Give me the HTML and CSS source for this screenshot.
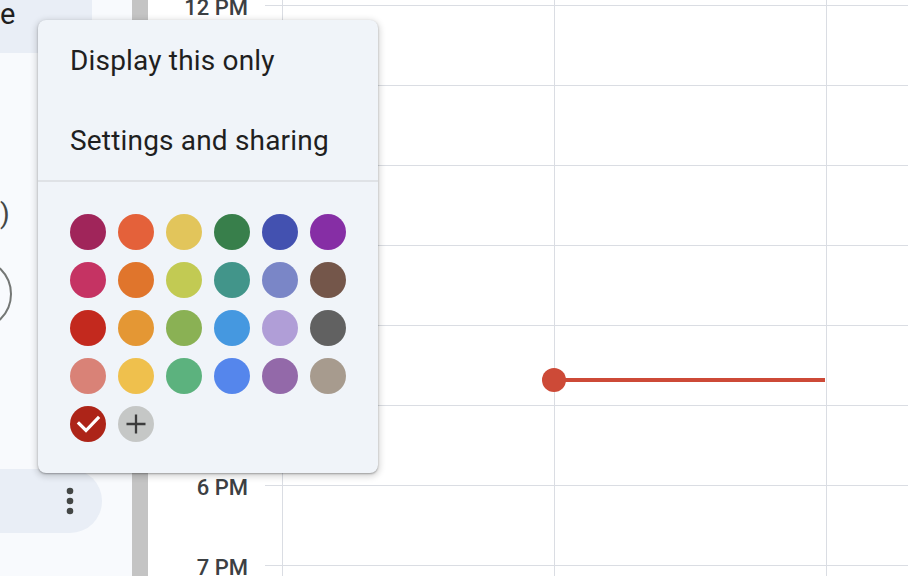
FILE: index.html
```html
<!DOCTYPE html>
<html>
<head>
<meta charset="utf-8">
<link rel="stylesheet" href="styles.css">
</head>
<body>
<div class="app">
  <aside class="sidebar">
    <div class="side-top"><span class="side-text">e</span></div>
    <div class="side-paren">)</div>
    <div class="side-ring"></div>
    <div class="side-row">
      <svg class="dots" width="8" height="28" viewBox="0 0 8 28"><circle cx="4" cy="4" r="3.3"/><circle cx="4" cy="14" r="3.3"/><circle cx="4" cy="24" r="3.3"/></svg>
    </div>
  </aside>
  <div class="scrollbar"></div>
  <main class="cal">
    <div class="grid">
      <div class="lbl"><span>11 AM</span></div><div class="tick"></div><div class="day"></div><div class="day"></div><div class="day"></div>
      <div class="lbl"><span>12 PM</span></div><div class="tick"></div><div class="day"></div><div class="day"></div><div class="day"></div>
      <div class="lbl"><span>1 PM</span></div><div class="tick"></div><div class="day"></div><div class="day"></div><div class="day"></div>
      <div class="lbl"><span>2 PM</span></div><div class="tick"></div><div class="day"></div><div class="day"></div><div class="day"></div>
      <div class="lbl"><span>3 PM</span></div><div class="tick"></div><div class="day"></div><div class="day"></div><div class="day"></div>
      <div class="lbl"><span>4 PM</span></div><div class="tick"></div><div class="day"></div><div class="day now-cell"><div class="now-line"></div><div class="now-dot"></div></div><div class="day"></div>
      <div class="lbl"><span>5 PM</span></div><div class="tick"></div><div class="day"></div><div class="day"></div><div class="day"></div>
      <div class="lbl"><span>6 PM</span></div><div class="tick"></div><div class="day"></div><div class="day"></div><div class="day"></div>
      <div class="lbl"><span>7 PM</span></div><div class="tick"></div><div class="day"></div><div class="day"></div><div class="day"></div>
    </div>
  </main>
  <div class="menu">
    <div class="menu-item">Display this only</div>
    <div class="menu-item">Settings and sharing</div>
    <div class="menu-sep"></div>
    <div class="palette">
      <span class="sw c1"></span><span class="sw c2"></span><span class="sw c3"></span><span class="sw c4"></span><span class="sw c5"></span><span class="sw c6"></span>
      <span class="sw c7"></span><span class="sw c8"></span><span class="sw c9"></span><span class="sw c10"></span><span class="sw c11"></span><span class="sw c12"></span>
      <span class="sw c13"></span><span class="sw c14"></span><span class="sw c15"></span><span class="sw c16"></span><span class="sw c17"></span><span class="sw c18"></span>
      <span class="sw c19"></span><span class="sw c20"></span><span class="sw c21"></span><span class="sw c22"></span><span class="sw c23"></span><span class="sw c24"></span>
      <span class="sw c25"><svg width="36" height="36" viewBox="0 0 36 36"><path d="M9 17.5 L16 24.5 L28 12" fill="none" stroke="#fff" stroke-width="3.2" stroke-linecap="square"/></svg></span>
      <span class="sw add"><svg width="36" height="36" viewBox="0 0 36 36"><path d="M8.5 18 H27.5 M18 8.5 V27.5" fill="none" stroke="#3c3c3c" stroke-width="2.3"/></svg></span>
    </div>
  </div>
</div>
</body>
</html>
```
FILE: styles.css
```css
* { box-sizing: border-box; }
html, body { margin: 0; padding: 0; }
body {
  width: 908px;
  height: 576px;
  overflow: hidden;
  background: #fff;
  font-family: Roboto, "Liberation Sans", sans-serif;
  color: #1f1f1f;
}
.app {
  position: relative;
  display: flex;
  width: 908px;
  height: 576px;
  overflow: hidden;
}
.sidebar {
  width: 132px;
  flex: none;
  background: #f8fafd;
  display: flex;
  flex-direction: column;
  align-items: flex-start;
}
.side-top {
  width: 92px;
  height: 53px;
  background: #e9eef6;
  font-size: 29px;
  line-height: 28px;
}
.side-text { display: block; margin-left: 0; }
.side-paren {
  margin-top: 147px;
  font-size: 28px;
  line-height: 28px;
  color: #444746;
  padding-left: 0;
}
.side-ring {
  margin-top: 30px;
  margin-left: -60px;
  width: 72px;
  height: 72px;
  border-radius: 50%;
  border: 2px solid #747775;
}
.side-row {
  margin-top: 139px;
  width: 102px;
  height: 64px;
  background: #e9eef6;
  border-radius: 0 32px 32px 0;
  display: flex;
  align-items: center;
  justify-content: flex-end;
  padding-right: 28px;
}
.dots { fill: #444746; display: block; }
.scrollbar {
  width: 16px;
  flex: none;
  background: #c4c4c4;
}
.cal {
  flex: 1;
  overflow: hidden;
  background: #fff;
}
.grid {
  margin-top: -75px;
  display: grid;
  grid-template-columns: 117px 17px 272px 272px 1fr;
  grid-auto-rows: 80px;
}
.lbl {
  text-align: right;
  padding-right: 17px;
}
.lbl span {
  display: block;
  margin-top: -8px;
  font-size: 22px;
  line-height: 22px;
  font-weight: 500;
  color: #3c4043;
}
.tick { border-top: 1px solid #dadde3; }
.day {
  border-top: 1px solid #dadde3;
  border-left: 1px solid #dadde3;
}
.now-cell { position: relative; }
.now-line {
  position: absolute;
  left: 0;
  right: 1px;
  top: 52px;
  height: 4px;
  background: #cd4a37;
}
.now-dot {
  position: absolute;
  left: -13px;
  top: 42px;
  width: 24px;
  height: 24px;
  border-radius: 50%;
  background: #cd4a37;
}
.menu {
  position: absolute;
  left: 38px;
  top: 20px;
  width: 340px;
  height: 453px;
  background: #f0f4f9;
  border-radius: 8px;
  box-shadow: 0 2px 6px 2px rgba(0,0,0,0.15), 0 1px 2px rgba(0,0,0,0.3);
  display: flex;
  flex-direction: column;
}
.menu-item {
  height: 80px;
  display: flex;
  align-items: center;
  padding-left: 32px;
  font-size: 28px;
  line-height: 32px;
  letter-spacing: 0.18px;
  color: #1f1f1f;
  padding-top: 2px;
}
.menu-sep {
  height: 2px;
  background: #dfe2e6;
}
.palette {
  padding: 32px 32px 31px;
  display: grid;
  grid-template-columns: repeat(6, 36px);
  grid-auto-rows: 36px;
  gap: 12px;
}
.sw {
  display: block;
  width: 36px;
  height: 36px;
  border-radius: 50%;
}
.sw svg { display: block; }
.c1 { background: #a0255a; }
.c2 { background: #e4613a; }
.c3 { background: #e2c55b; }
.c4 { background: #387f4b; }
.c5 { background: #4351b0; }
.c6 { background: #862ea5; }
.c7 { background: #c53363; }
.c8 { background: #e0752c; }
.c9 { background: #c2ca53; }
.c10 { background: #42958a; }
.c11 { background: #7a86c7; }
.c12 { background: #74564a; }
.c13 { background: #c3291e; }
.c14 { background: #e49734; }
.c15 { background: #8ab154; }
.c16 { background: #4598e0; }
.c17 { background: #b09ed7; }
.c18 { background: #616161; }
.c19 { background: #d98277; }
.c20 { background: #efc04d; }
.c21 { background: #5cb27e; }
.c22 { background: #5586ec; }
.c23 { background: #9369a9; }
.c24 { background: #a79b8e; }
.c25 { background: #ad2418; }
.add { background: #c5c7c6; }
```
